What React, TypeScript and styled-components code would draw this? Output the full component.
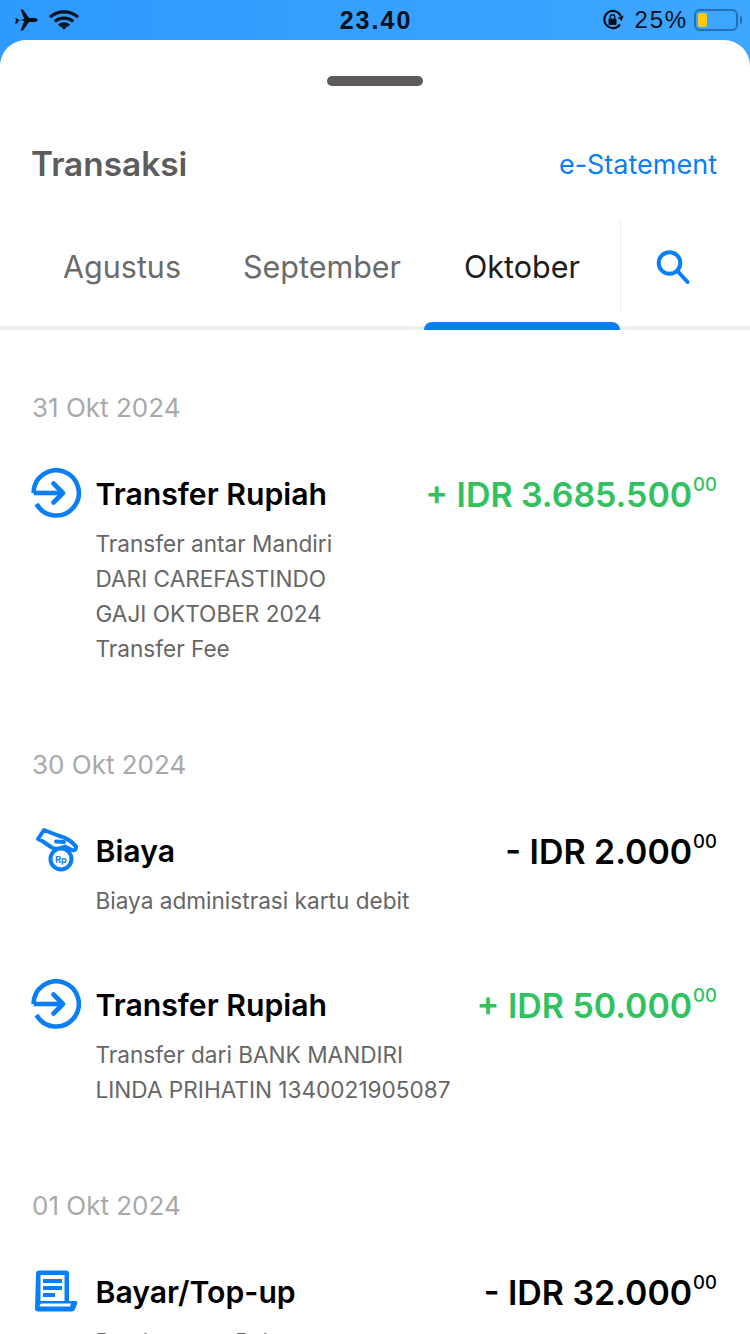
import React from 'react';
import styled, { createGlobalStyle } from 'styled-components';

const GlobalStyle = createGlobalStyle`
    html, body {
        margin: 0;
        padding: 0;
        background: #ffffff;
    }
    * {
        box-sizing: border-box;
    }
`;

const BLUE = '#0a7ff5';

const TransferIcon = () => (
    <svg width="50" height="50" viewBox="0 0 50 50" fill="none" stroke={BLUE} strokeWidth="4.6">
        <path d="M2.6 25A22.6 22.6 0 1 1 5.5 36" />
        <path d="M2.6 25H32" />
        <path d="M22.5 15.5L32 25L22.5 34.5" strokeLinecap="round" strokeLinejoin="round" />
    </svg>
);

const FeeIcon = () => (
    <svg width="50" height="50" viewBox="0 0 50 50" fill="none" stroke={BLUE} strokeWidth="4" strokeLinejoin="round" strokeLinecap="round">
        <path d="M7 14L13 5L27 10.5C33 12 40 15 45 21.5C45.5 24.5 43.5 26 41 25L34 21.5C29 24 24 25 20 22L12 16.5Z" />
        <path d="M25 16.5L33 17" />
        <circle cx="30" cy="34" r="10.5" fill="#ffffff" />
        <text x="30" y="37.5" textAnchor="middle" fontFamily="Inter, sans-serif" fontSize="9" fontWeight="700" fill={BLUE} stroke="none">Rp</text>
    </svg>
);

const BillIcon = () => (
    <svg width="44" height="42" viewBox="0 0 44 42" fill="none">
        <path d="M2 3.5A3 3 0 0 1 5 .5H32A3 3 0 0 1 35 3.5V31H41.5A1.8 1.8 0 0 1 43.2 33.5L41 39.5A3.5 3.5 0 0 1 37.5 41.5H4A3 3 0 0 1 1 38.5Z" fill={BLUE} />
        <rect x="6.5" y="5" width="24" height="26" fill="#ffffff" />
        <path d="M5.5 36.5H36L37 33.5H8Q6 33.5 5.5 36.5Z" fill="#ffffff" />
        <rect x="9" y="9" width="19" height="4" fill={BLUE} />
        <rect x="9" y="16" width="19" height="4" fill={BLUE} />
        <rect x="9" y="23" width="12" height="4" fill={BLUE} />
    </svg>
);

const transactions = [
    {
        date: '31 Okt 2024',
        items: [
            {
                icon: 'transfer',
                title: 'Transfer Rupiah',
                amount: '+ IDR 3.685.500',
                income: true,
                lines: ['Transfer antar Mandiri', 'DARI CAREFASTINDO', 'GAJI OKTOBER 2024', 'Transfer Fee'],
            },
        ],
    },
    {
        date: '30 Okt 2024',
        items: [
            {
                icon: 'fee',
                title: 'Biaya',
                amount: '- IDR 2.000',
                income: false,
                lines: ['Biaya administrasi kartu debit'],
            },
            {
                icon: 'transfer',
                title: 'Transfer Rupiah',
                amount: '+ IDR 50.000',
                income: true,
                lines: ['Transfer dari BANK MANDIRI', 'LINDA PRIHATIN 1340021905087'],
            },
        ],
    },
    {
        date: '01 Okt 2024',
        items: [
            {
                icon: 'bill',
                title: 'Bayar/Top-up',
                amount: '- IDR 32.000',
                income: false,
                lines: ['Pembayaran Paket'],
            },
        ],
    },
];

const renderIcon = (icon: string) => {
    if (icon === 'fee') return <FeeIcon />;
    if (icon === 'bill') return <BillIcon />;
    return <TransferIcon />;
};

const App: React.FC = () => {
    return (
        <>
        <GlobalStyle />
        <Screen>
            <StatusBar>
                <StatusSide>
                    <svg width="24" height="22" viewBox="0 0 24 22" fill="#05101c">
                        <path d="M1 9.5L3 9.5L5.6 11.6L10.2 9.7L6.6 0.8L9 0.5L15 9.1L20.6 9.1C22.6 9.1 23.6 10.2 23.6 11C23.6 11.8 22.6 12.9 20.6 12.9L15 12.9L9 21.5L6.6 21.2L10.2 12.3L5.6 10.4L3 14.5L1 14.5L2.2 11Z" />
                    </svg>
                    <svg width="32" height="22" viewBox="0 0 32 22" fill="none" stroke="#05101c" strokeWidth="3.2">
                        <path d="M2 8.2C9.5 1 22.5 1 30 8.2" />
                        <path d="M6.8 12.5C11.5 8 20.5 8 25.2 12.5" />
                        <path d="M11 16.4C13.8 14.2 18.2 14.2 21 16.4" />
                        <path d="M12.6 17.3L16 21L19.4 17.3Q16 15.3 12.6 17.3Z" fill="#05101c" stroke="none" />
                    </svg>
                </StatusSide>
                <Clock>23.40</Clock>
                <StatusRight>
                    <svg width="22" height="22" viewBox="0 0 22 22" fill="none">
                        <path d="M18 15.5A8.6 8.6 0 1 1 18.8 7" stroke="#05101c" strokeWidth="2.2" />
                        <path d="M21.6 6.5L15.6 8.5L19.8 12Z" fill="#05101c" />
                        <rect x="6.5" y="9.5" width="8" height="6.5" rx="1" fill="#05101c" />
                        <path d="M8.2 9.5V8A2.3 2.3 0 0 1 12.8 8V9.5" stroke="#05101c" strokeWidth="1.4" />
                    </svg>
                    <Percent>25%</Percent>
                    <Battery>
                        <BatteryFill />
                    </Battery>
                </StatusRight>
            </StatusBar>
            <Sheet>
                <Handle />
                <Header>
                    <Title>Transaksi</Title>
                    <Statement>e-Statement</Statement>
                </Header>
                <Tabs>
                    <Tab>Agustus</Tab>
                    <Tab>September</Tab>
                    <Tab active>Oktober</Tab>
                    <SearchBox>
                        <svg width="36" height="36" viewBox="0 0 36 36" fill="none" stroke={BLUE} strokeWidth="4">
                            <circle cx="14.5" cy="14" r="10.8" />
                            <path d="M22.5 22L32.5 33" strokeLinecap="round" />
                        </svg>
                    </SearchBox>
                </Tabs>
                <Groups>
                    {transactions.map(group => (
                        <Group key={group.date}>
                            <DateLabel>{group.date}</DateLabel>
                            {group.items.map(item => (
                                <Row key={item.title + item.amount}>
                                    <IconSlot>{renderIcon(item.icon)}</IconSlot>
                                    <Body>
                                        <TopLine>
                                            <RowTitle>{item.title}</RowTitle>
                                            <Amount income={item.income}>
                                                {item.amount}
                                                <Cents>00</Cents>
                                            </Amount>
                                        </TopLine>
                                        <Lines>
                                            {item.lines.map(line => (
                                                <Line key={line}>{line}</Line>
                                            ))}
                                        </Lines>
                                    </Body>
                                </Row>
                            ))}
                        </Group>
                    ))}
                </Groups>
            </Sheet>
        </Screen>
        </>
    );
};

const Screen = styled.div`
    width: 750px;
    height: 1334px;
    overflow: hidden;
    font-family: Inter, "Liberation Sans", sans-serif;
    background: linear-gradient(90deg, #2e9afe, #3da6ff);
`;

const StatusBar = styled.div`
    height: 40px;
    padding: 0 12px 0 14px;
    display: grid;
    grid-template-columns: 1fr auto 1fr;
    align-items: center;
`;

const StatusSide = styled.div`
    display: flex;
    align-items: center;
    gap: 10px;
`;

const StatusRight = styled(StatusSide)`
    justify-content: flex-end;
    gap: 11px;
`;

const Clock = styled.div`
    font-family: "Liberation Sans", Arial, sans-serif;
    font-weight: 700;
    font-size: 25px;
    letter-spacing: 2px;
    color: #05101c;
`;

const Percent = styled.div`
    font-family: "Liberation Sans", Arial, sans-serif;
    font-size: 24px;
    letter-spacing: 1.8px;
    color: #05101c;
    margin-right: -5px;
`;

const Battery = styled.div`
    position: relative;
    width: 44px;
    height: 22px;
    padding: 2px;
    border: 2px solid #2270b5;
    border-radius: 6px;
    &::after {
        content: "";
        position: absolute;
        right: -6px;
        top: 5px;
        width: 2px;
        height: 8px;
        border-radius: 0 2px 2px 0;
        background: #2270b5;
    }
`;

const BatteryFill = styled.div`
    width: 9px;
    height: 100%;
    border-radius: 2px;
    background: #fdcb0c;
`;

const Sheet = styled.div`
    background: #ffffff;
    border-radius: 26px 26px 0 0;
    height: 1294px;
`;

const Handle = styled.div`
    width: 96px;
    height: 10px;
    margin: 0 auto;
    position: relative;
    top: 36px;
    border-radius: 5px;
    background: #5e5a5c;
`;

const Header = styled.div`
    display: flex;
    justify-content: space-between;
    align-items: center;
    height: 46px;
    margin-top: 91px;
    padding: 0 33px 0 31px;
`;

const Title = styled.div`
    font-size: 33.4px;
    font-weight: 600;
    color: #5c5c5c;
`;

const Statement = styled.div`
    font-size: 27px;
    color: ${BLUE};
`;

const Tabs = styled.div`
    display: flex;
    height: 110px;
    margin-top: 33px;
    padding-left: 22px;
    border-bottom: 4px solid #f0f0f0;
`;

const Tab = styled.div<{ active?: boolean }>`
    position: relative;
    width: 200px;
    padding-top: 25px;
    text-align: center;
    font-size: 30.5px;
    line-height: 44px;
    color: ${props => (props.active ? '#1c1c1c' : '#6b6b6b')};
    &::after {
        content: "";
        display: ${props => (props.active ? 'block' : 'none')};
        position: absolute;
        left: 2px;
        right: 2px;
        bottom: -4px;
        height: 8px;
        border-radius: 8px 8px 0 0;
        background: ${BLUE};
    }
`;

const SearchBox = styled.div`
    width: 106px;
    height: 92px;
    margin-left: -2px;
    padding-top: 29px;
    padding-left: 34px;
    border-left: 1px solid #ececec;
`;

const Groups = styled.div`
    padding-top: 37px;
`;

const Group = styled.div`
    padding: 24px 33px 0 32px;
    margin-bottom: -4px;
`;

const DateLabel = styled.div`
    font-size: 26px;
    line-height: 34px;
    color: #a9a9a9;
    margin-bottom: 44px;
`;

const Row = styled.div`
    display: flex;
    gap: 14.5px;
    margin-bottom: 62px;
`;

const IconSlot = styled.div`
    width: 50px;
    height: 50px;
    flex-shrink: 0;
    margin: -1px 0 0 -1px;
    display: flex;
    align-items: center;
    justify-content: center;
`;

const Body = styled.div`
    flex: 1;
`;

const TopLine = styled.div`
    display: flex;
    justify-content: space-between;
    align-items: flex-start;
    height: 57px;
`;

const RowTitle = styled.div`
    font-size: 30.2px;
    font-weight: 600;
    line-height: 50px;
    color: #000000;
`;

const Amount = styled.div<{ income: boolean }>`
    font-size: 33.9px;
    font-weight: 600;
    line-height: 52px;
    color: ${props => (props.income ? '#2fc25f' : '#000000')};
`;

const Cents = styled.span`
    display: inline-block;
    vertical-align: top;
    font-size: 18.5px;
    font-weight: 500;
    line-height: 30px;
    margin-left: 1px;
`;

const Lines = styled.div`
    font-size: 22.6px;
    line-height: 35px;
    color: #666666;
`;

const Line = styled.div``;

export default App;
